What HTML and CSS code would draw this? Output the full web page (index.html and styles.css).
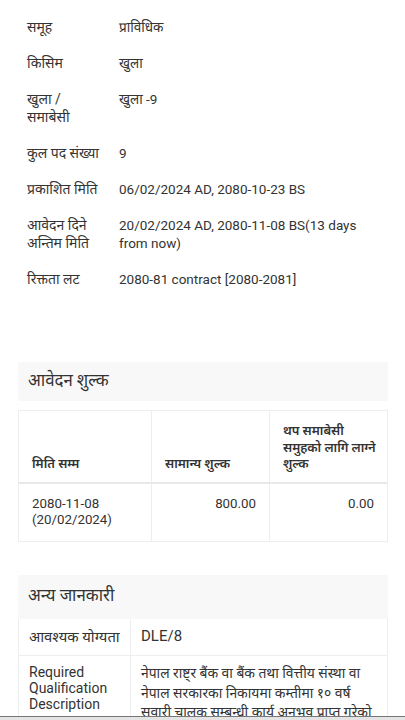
FILE: index.html
```html
<!DOCTYPE html>
<html lang="ne">
<head>
    <meta charset="UTF-8">
    <meta name="viewport" content="width=device-width, initial-scale=1.0">
    <title>विज्ञापन विवरण</title>
    <link rel="stylesheet" href="styles.css">
</head>
<body>
<div class="page">
    <table class="details">
        <tr><td class="label">समूह</td><td>प्राविधिक</td></tr>
        <tr><td class="label">किसिम</td><td>खुला</td></tr>
        <tr><td class="label">खुला / समाबेसी</td><td>खुला -9</td></tr>
        <tr><td class="label">कुल पद संख्या</td><td>9</td></tr>
        <tr><td class="label">प्रकाशित मिति</td><td>06/02/2024 AD, 2080-10-23 BS</td></tr>
        <tr><td class="label">आवेदन दिने अन्तिम मिति</td><td>20/02/2024 AD, 2080-11-08 BS(13 days from now)</td></tr>
        <tr><td class="label">रिक्तता लट</td><td>2080-81 contract [2080-2081]</td></tr>
    </table>

    <div class="section fee">
        <div class="section-head">आवेदन शुल्क</div>
        <table class="fees">
            <thead>
                <tr>
                    <th class="c1">मिति सम्म</th>
                    <th class="c2">सामान्य शुल्क</th>
                    <th class="c3">थप समाबेसी समुहको लागि लाग्ने शुल्क</th>
                </tr>
            </thead>
            <tbody>
                <tr>
                    <td>2080-11-08 (20/02/2024)</td>
                    <td class="num">800.00</td>
                    <td class="num">0.00</td>
                </tr>
            </tbody>
        </table>
    </div>

    <div class="section other">
        <div class="section-head tall">अन्य जानकारी</div>
        <table class="extra">
            <tr>
                <td class="key">आवश्यक योग्यता</td>
                <td class="val code">DLE/8</td>
            </tr>
            <tr>
                <td class="key en">Required Qualification Description</td>
                <td class="val">नेपाल राष्ट्र बैंक वा बैंक तथा वित्तीय संस्था वा नेपाल सरकारका निकायमा कम्तीमा १० वर्ष सवारी चालक सम्बन्धी कार्य अनुभव प्राप्त गरेको ।</td>
            </tr>
        </table>
    </div>
</div>
<div class="bottom-bar"></div>
</body>
</html>
```

FILE: styles.css
```css
*{
    margin: 0px;
    padding: 0px;
    box-sizing: border-box;
}

body{
    font-family: Roboto, "Noto Sans Devanagari", "Noto Sans", sans-serif;
    background-color: white;
    color: #333;
}

.page {
    padding: 9px 17px 40px 18px;
}

table {
    border-collapse: collapse;
    width: 100%;
    table-layout: fixed;
}

/* top details list */
.details td {
    font-size: 13.5px;
    line-height: 18px;
    padding: 9px;
    vertical-align: top;
}

.details .label {
    width: 92px;
    font-size: 14px;
    padding-right: 6px;
}

/* section boxes */
.section-head {
    background-color: #f8f8f8;
    font-size: 16.8px;
    padding: 0 10px;
    height: 39px;
    display: flex;
    align-items: center;
}

.section-head.tall {
    height: 44px;
}

.fee {
    margin-top: 65px;
}

.other {
    margin-top: 33px;
}

.fees {
    margin-top: 9px;
}

.fees th, .fees td {
    border: 1px solid #eceeef;
    padding: 12px 13px;
    line-height: 16.5px;
    text-align: left;
}

.fees th {
    font-size: 12.8px;
    font-weight: 600;
    vertical-align: bottom;
    padding-bottom: 9px;
    border-bottom: 2px solid #e6e8ea;
}

.fees th.c3 {
    padding-right: 4px;
}

.fees td {
    font-size: 13.3px;
    vertical-align: top;
}

.fees .c1 { width: 133px; }
.fees .c2 { width: 118px; }

.fees td.num {
    text-align: right;
}

.extra td {
    border: 1px solid #eceeef;
    padding: 8px 10px;
    vertical-align: top;
}

.extra .key {
    width: 112px;
    font-size: 14.8px;
    line-height: 16px;
}

.extra .key.en {
    font-size: 14px;
}

.extra .val {
    font-size: 13.9px;
    line-height: 19.5px;
}

.extra .val.code {
    font-size: 15px;
}

.extra tr:first-child td {
    border-top: none;
    height: 37px;
    vertical-align: middle;
}

.bottom-bar {
    position: fixed;
    left: 0;
    right: 0;
    bottom: 0;
    height: 4px;
    background: #e4e4e4;
    border-top: 1px solid #777;
}
```
